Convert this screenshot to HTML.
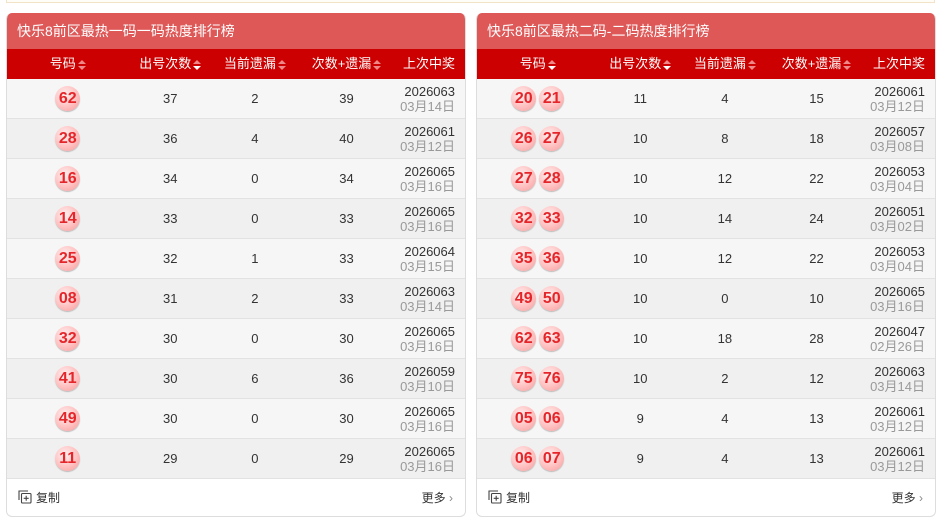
<!DOCTYPE html>
<html><head><meta charset="utf-8"><style>
*{margin:0;padding:0;box-sizing:border-box}
body{width:941px;height:522px;background:#fff;font-family:"Liberation Sans","Noto Sans CJK SC",sans-serif;position:relative;overflow:hidden}
.top{position:absolute;left:6px;top:-2px;width:929px;height:5px;border:1px solid #f3e3c6;border-top:none;background:#fffdf7}
.panel{position:absolute;top:13px;width:460px;height:504px;border:1px solid #ddd;border-top:none;border-radius:6px;overflow:hidden;background:#fff}
.title{height:36px;background:#de5858;color:#fff;font-size:14px;line-height:36px;padding-left:10px}
.hd{height:30px;background:#cc0000;color:#fff;font-size:13px;display:flex;line-height:30px}
.row{height:40px;display:flex;border-bottom:1px solid #e2e2e2;font-size:13px;color:#333;align-items:center}
.row:nth-child(odd){background:#f6f6f6}.row:nth-child(even){background:#f0f0f0}
.c1{width:122px;text-align:center}.c2{width:84px;text-align:center}.c3{width:86px;text-align:center}.c4{width:98px;text-align:center}.c5{width:70px;text-align:right;padding-right:10px}
.c5 .d{color:#999;line-height:15px}.c5 .n{line-height:15px}
.ar{display:inline-block;width:8px;height:10px;position:relative;vertical-align:middle;margin-left:2px}
.ar:before,.ar:after{content:"";position:absolute;left:0;border-left:4px solid transparent;border-right:4px solid transparent}
.ar:before{top:0;border-bottom:4px solid #e88}.ar:after{bottom:0;border-top:4px solid #e88}
.ar.dn:after{border-top-color:#fff}
.b{display:inline-block;width:25px;height:25px;border-radius:50%;background:radial-gradient(circle at 40% 35%,#fff0f0 0%,#ffc0c0 55%,#f29a9a 100%);color:#e4252a;font-weight:bold;font-size:16px;line-height:25px;text-align:center;box-shadow:0 1px 1px #bbb;margin:0 1.5px}
.ft{height:37px;display:flex;justify-content:space-between;align-items:center;padding:0 12px 0 11px;font-size:12px;color:#333}
</style></head><body>
<div class="top"></div>

<div class="panel" style="left:6px">
<div class="title">快乐8前区最热一码一码热度排行榜</div>
<div class="hd"><div class="c1">号码<span class="ar"></span></div><div class="c2">出号次数<span class="ar dn"></span></div><div class="c3">当前遗漏<span class="ar"></span></div><div class="c4">次数+遗漏<span class="ar"></span></div><div class="c5">上次中奖</div></div>
<div>
<div class="row"><div class="c1"><span class="b">62</span></div><div class="c2">37</div><div class="c3">2</div><div class="c4">39</div><div class="c5"><div class="n">2026063</div><div class="d">03月14日</div></div></div>
<div class="row"><div class="c1"><span class="b">28</span></div><div class="c2">36</div><div class="c3">4</div><div class="c4">40</div><div class="c5"><div class="n">2026061</div><div class="d">03月12日</div></div></div>
<div class="row"><div class="c1"><span class="b">16</span></div><div class="c2">34</div><div class="c3">0</div><div class="c4">34</div><div class="c5"><div class="n">2026065</div><div class="d">03月16日</div></div></div>
<div class="row"><div class="c1"><span class="b">14</span></div><div class="c2">33</div><div class="c3">0</div><div class="c4">33</div><div class="c5"><div class="n">2026065</div><div class="d">03月16日</div></div></div>
<div class="row"><div class="c1"><span class="b">25</span></div><div class="c2">32</div><div class="c3">1</div><div class="c4">33</div><div class="c5"><div class="n">2026064</div><div class="d">03月15日</div></div></div>
<div class="row"><div class="c1"><span class="b">08</span></div><div class="c2">31</div><div class="c3">2</div><div class="c4">33</div><div class="c5"><div class="n">2026063</div><div class="d">03月14日</div></div></div>
<div class="row"><div class="c1"><span class="b">32</span></div><div class="c2">30</div><div class="c3">0</div><div class="c4">30</div><div class="c5"><div class="n">2026065</div><div class="d">03月16日</div></div></div>
<div class="row"><div class="c1"><span class="b">41</span></div><div class="c2">30</div><div class="c3">6</div><div class="c4">36</div><div class="c5"><div class="n">2026059</div><div class="d">03月10日</div></div></div>
<div class="row"><div class="c1"><span class="b">49</span></div><div class="c2">30</div><div class="c3">0</div><div class="c4">30</div><div class="c5"><div class="n">2026065</div><div class="d">03月16日</div></div></div>
<div class="row"><div class="c1"><span class="b">11</span></div><div class="c2">29</div><div class="c3">0</div><div class="c4">29</div><div class="c5"><div class="n">2026065</div><div class="d">03月16日</div></div></div>
</div>
<div class="ft"><span><svg width="14" height="14" viewBox="0 0 14 14" style="vertical-align:-2px;margin-right:4px" fill="none" stroke="#444" stroke-width="1.1"><path d="M1 10V1h9"/><rect x="3.5" y="3.5" width="9.5" height="9.5" rx="1"/><path d="M8.2 5.8v5M5.7 8.3h5"/></svg>复制</span><span>更多 <span style="color:#888">›</span></span></div>
</div>

<div class="panel" style="left:476px">
<div class="title">快乐8前区最热二码-二码热度排行榜</div>
<div class="hd"><div class="c1">号码<span class="ar dn"></span></div><div class="c2">出号次数<span class="ar dn"></span></div><div class="c3">当前遗漏<span class="ar"></span></div><div class="c4">次数+遗漏<span class="ar"></span></div><div class="c5">上次中奖</div></div>
<div>
<div class="row"><div class="c1"><span class="b">20</span><span class="b">21</span></div><div class="c2">11</div><div class="c3">4</div><div class="c4">15</div><div class="c5"><div class="n">2026061</div><div class="d">03月12日</div></div></div>
<div class="row"><div class="c1"><span class="b">26</span><span class="b">27</span></div><div class="c2">10</div><div class="c3">8</div><div class="c4">18</div><div class="c5"><div class="n">2026057</div><div class="d">03月08日</div></div></div>
<div class="row"><div class="c1"><span class="b">27</span><span class="b">28</span></div><div class="c2">10</div><div class="c3">12</div><div class="c4">22</div><div class="c5"><div class="n">2026053</div><div class="d">03月04日</div></div></div>
<div class="row"><div class="c1"><span class="b">32</span><span class="b">33</span></div><div class="c2">10</div><div class="c3">14</div><div class="c4">24</div><div class="c5"><div class="n">2026051</div><div class="d">03月02日</div></div></div>
<div class="row"><div class="c1"><span class="b">35</span><span class="b">36</span></div><div class="c2">10</div><div class="c3">12</div><div class="c4">22</div><div class="c5"><div class="n">2026053</div><div class="d">03月04日</div></div></div>
<div class="row"><div class="c1"><span class="b">49</span><span class="b">50</span></div><div class="c2">10</div><div class="c3">0</div><div class="c4">10</div><div class="c5"><div class="n">2026065</div><div class="d">03月16日</div></div></div>
<div class="row"><div class="c1"><span class="b">62</span><span class="b">63</span></div><div class="c2">10</div><div class="c3">18</div><div class="c4">28</div><div class="c5"><div class="n">2026047</div><div class="d">02月26日</div></div></div>
<div class="row"><div class="c1"><span class="b">75</span><span class="b">76</span></div><div class="c2">10</div><div class="c3">2</div><div class="c4">12</div><div class="c5"><div class="n">2026063</div><div class="d">03月14日</div></div></div>
<div class="row"><div class="c1"><span class="b">05</span><span class="b">06</span></div><div class="c2">9</div><div class="c3">4</div><div class="c4">13</div><div class="c5"><div class="n">2026061</div><div class="d">03月12日</div></div></div>
<div class="row"><div class="c1"><span class="b">06</span><span class="b">07</span></div><div class="c2">9</div><div class="c3">4</div><div class="c4">13</div><div class="c5"><div class="n">2026061</div><div class="d">03月12日</div></div></div>
</div>
<div class="ft"><span><svg width="14" height="14" viewBox="0 0 14 14" style="vertical-align:-2px;margin-right:4px" fill="none" stroke="#444" stroke-width="1.1"><path d="M1 10V1h9"/><rect x="3.5" y="3.5" width="9.5" height="9.5" rx="1"/><path d="M8.2 5.8v5M5.7 8.3h5"/></svg>复制</span><span>更多 <span style="color:#888">›</span></span></div>
</div>
</body></html>
